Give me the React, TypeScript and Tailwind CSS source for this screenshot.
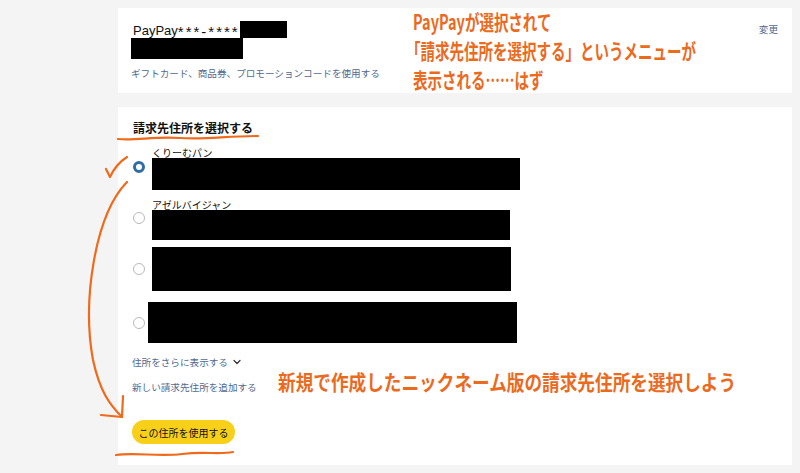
import { FC } from "react"
import { ChevronDown } from "lucide-react"

const jp = { fontFamily: '"Noto Sans CJK JP", "Liberation Sans", sans-serif' }
const lat = { fontFamily: '"Liberation Sans", "Noto Sans CJK JP", sans-serif' }

interface IRadioRow {
  label?: string
  selected?: boolean
  boxW: number
  boxH: number
  boxX?: number
  radioTop?: number
}

const Radio: FC<{ selected?: boolean }> = ({ selected }) => (
  <span
    className={`block w-[12px] h-[12px] rounded-full bg-white shrink-0 ${selected ? "border-[3.5px] border-[#2f6ea5]" : "border border-[#b9b9b9]"}`}
  />
)

const RadioRow: FC<IRadioRow> = (props): JSX.Element => {
  if (props.label) {
    return (
      <div className="flex items-start">
        <div style={{ marginTop: props.radioTop }}>
          <Radio selected={props.selected} />
        </div>
        <div className="ml-[7px]">
          <p className="text-[10px] leading-[11px] text-[#111]">{props.label}</p>
          <div className="bg-black" style={{ width: props.boxW, height: props.boxH }} />
        </div>
      </div>
    )
  }
  return (
    <div className="flex items-center">
      <Radio selected={props.selected} />
      <div className="bg-black" style={{ width: props.boxW, height: props.boxH, marginLeft: props.boxX ?? 7 }} />
    </div>
  )
}

const App: FC = (): JSX.Element => {
  return (
    <div className="relative w-[800px] h-[473px] overflow-hidden bg-[#f4f4f4] pl-[118px] pr-[8px] pt-[8px]" style={jp}>
      {/* payment card */}
      <div className="flex justify-between bg-white h-[85px] pl-[13px] pr-[14px] pt-[13px]">
        <div>
          <div className="flex items-end pl-[2px]">
            <span className="text-[13px] leading-[15px] text-[#111]" style={lat}>
              PayPay<span className="text-[15px] leading-[15px] tracking-[2px] relative top-[2px]">***-****</span>
            </span>
            <div className="w-[47px] h-[17px] bg-black" />
          </div>
          <div className="w-[112px] h-[21px] bg-black" />
          <p className="mt-[7px] text-[9.6px] leading-[14px] text-[#51698f]">ギフトカード、商品券、プロモーションコードを使用する</p>
        </div>
        <p className="mt-[1px] text-[9.6px] leading-[14px] text-[#51698f]">変更</p>
      </div>

      {/* address card */}
      <div className="mt-[14px] bg-white h-[358px] pl-[15px] pt-[14px]">
        <h2 className="text-[12px] leading-[14px] font-bold text-[#111]">請求先住所を選択する</h2>
        <div className="mt-[12px]">
          <RadioRow label="くりーむパン" selected boxW={368} boxH={32} radioTop={14} />
        </div>
        <div className="mt-[9px]">
          <RadioRow label="アゼルバイジャン" boxW={358} boxH={30} radioTop={13} />
        </div>
        <div className="mt-[7px]">
          <RadioRow boxW={359} boxH={44} />
        </div>
        <div className="mt-[11px]">
          <RadioRow boxW={369} boxH={41} boxX={3} />
        </div>
        <div className="mt-[12px] flex items-center gap-[3px] text-[9.6px] leading-[14px] text-[#51698f] -ml-[1px]">
          住所をさらに表示する
          <ChevronDown size={12} strokeWidth={2.5} className="text-[#333]" />
        </div>
        <p className="mt-[11px] text-[9.6px] leading-[14px] text-[#51698f] -ml-[1px]">新しい請求先住所を追加する</p>
        <button type="button" className="mt-[26px] -ml-[1px] h-[24px] w-[103px] rounded-full bg-[#f8d01a] text-[10px] text-[#111]">
          この住所を使用する
        </button>
      </div>

      {/* annotations */}
      <div className="absolute left-[413px] top-[7px] text-[21px] leading-[29px] font-bold text-[#ea6a1e] whitespace-nowrap origin-left scale-x-[0.69]">
        <p>PayPayが選択されて</p>
        <p className="-ml-[10px]">「請求先住所を選択する」というメニューが</p>
        <p>表示される……はず</p>
      </div>
      <p className="absolute left-[278px] top-[367px] text-[21px] leading-[29px] font-bold text-[#ea6a1e] whitespace-nowrap origin-left scale-x-[0.84]">
        新規で作成したニックネーム版の請求先住所を選択しよう
      </p>
      <svg className="absolute inset-0 pointer-events-none" width="800" height="473" viewBox="0 0 800 473" fill="none" stroke="#ef6a1a" strokeWidth="2.2" strokeLinecap="round" strokeLinejoin="round">
        <path d="M118 139 C 135 141, 155 136, 180 138 S 225 136, 258 136" />
        <path d="M106 169 L110 177 Q 116 164 127 157" />
        <path d="M127 182 C 95 215, 82 300, 93 360 C 100 392, 110 405, 122 417" />
        <path d="M101 415 L122 417 L123 396" />
        <path d="M116 455 C 135 452, 158 457, 182 454 S 218 455, 233 452" />
      </svg>
    </div>
  )
}

export default App
